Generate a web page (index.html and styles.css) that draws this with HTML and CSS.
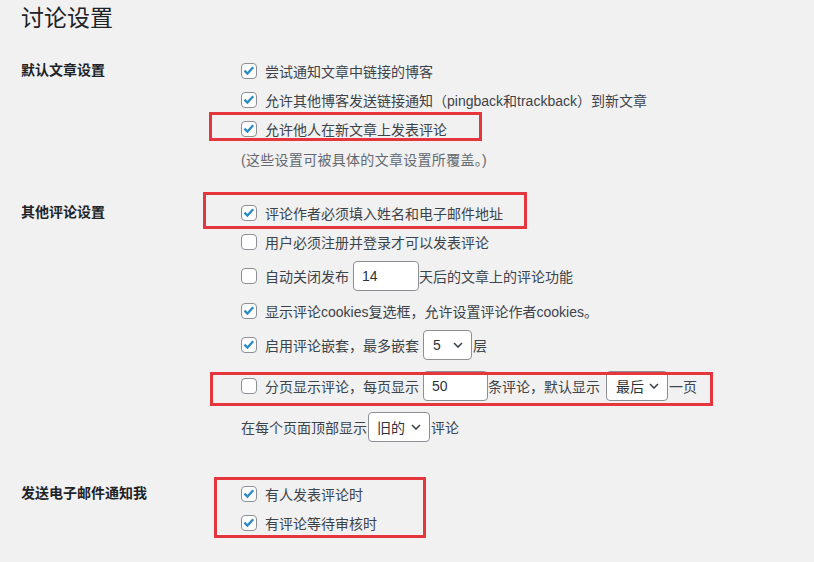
FILE: index.html
```html
<!DOCTYPE html>
<html lang="zh-CN">
<head>
<meta charset="utf-8">
<title>讨论设置</title>
<link rel="stylesheet" href="styles.css">
</head>
<body>
<div class="page">
  <h1 class="title">讨论设置</h1>

  <section class="group g1">
    <div class="th">默认文章设置</div>
    <div class="td">
      <div class="row"><span class="cb on"><svg viewBox="0 0 16 16" width="14" height="14"><path d="M2.8 7.6 L6.2 11 L12.8 3.8" /></svg></span>尝试通知文章中链接的博客</div>
      <div class="row"><span class="cb on"><svg viewBox="0 0 16 16" width="14" height="14"><path d="M2.8 7.6 L6.2 11 L12.8 3.8" /></svg></span>允许其他博客发送链接通知（pingback和trackback）到新文章</div>
      <div class="row"><span class="cb on"><svg viewBox="0 0 16 16" width="14" height="14"><path d="M2.8 7.6 L6.2 11 L12.8 3.8" /></svg></span>允许他人在新文章上发表评论</div>
      <div class="row desc">(这些设置可被具体的文章设置所覆盖。)</div>
    </div>
  </section>

  <section class="group g2">
    <div class="th">其他评论设置</div>
    <div class="td">
      <div class="row"><span class="cb on"><svg viewBox="0 0 16 16" width="14" height="14"><path d="M2.8 7.6 L6.2 11 L12.8 3.8" /></svg></span>评论作者必须填入姓名和电子邮件地址</div>
      <div class="row"><span class="cb"></span>用户必须注册并登录才可以发表评论</div>
      <div class="row h40"><span class="cb"></span>自动关闭发布<span class="input w66">14</span>天后的文章上的评论功能</div>
      <div class="row"><span class="cb on"><svg viewBox="0 0 16 16" width="14" height="14"><path d="M2.8 7.6 L6.2 11 L12.8 3.8" /></svg></span>显示评论cookies复选框，允许设置评论作者cookies。</div>
      <div class="row h40"><span class="cb on"><svg viewBox="0 0 16 16" width="14" height="14"><path d="M2.8 7.6 L6.2 11 L12.8 3.8" /></svg></span>启用评论嵌套，最多嵌套<span class="select w49">5<svg viewBox="0 0 10 6" width="10" height="6"><path d="M1 1 L5 5 L9 1" /></svg></span>层</div>
      <div class="row h41"><span class="cb"></span>分页显示评论，每页显示<span class="input w65">50</span>条评论，默认显示<span class="select w62 wide">最后<svg viewBox="0 0 10 6" width="10" height="6"><path d="M1 1 L5 5 L9 1" /></svg></span>一页</div>
      <div class="row h41">在每个页面顶部显示<span class="select w62 tight">旧的<svg viewBox="0 0 10 6" width="10" height="6"><path d="M1 1 L5 5 L9 1" /></svg></span>评论</div>
    </div>
  </section>

  <section class="group g3">
    <div class="th">发送电子邮件通知我</div>
    <div class="td">
      <div class="row"><span class="cb on"><svg viewBox="0 0 16 16" width="14" height="14"><path d="M2.8 7.6 L6.2 11 L12.8 3.8" /></svg></span>有人发表评论时</div>
      <div class="row"><span class="cb on"><svg viewBox="0 0 16 16" width="14" height="14"><path d="M2.8 7.6 L6.2 11 L12.8 3.8" /></svg></span>有评论等待审核时</div>
    </div>
  </section>

  <div class="mark m1"></div>
  <div class="mark m2"></div>
  <div class="mark m3"></div>
  <div class="mark m4"></div>
</div>
</body>
</html>
```

FILE: styles.css
```css
html, body {
  margin: 0;
  padding: 0;
  background: #f1f1f1;
}

.page {
  position: relative;
  width: 814px;
  height: 562px;
  padding-left: 21px;
  box-sizing: border-box;
  font-family: "Liberation Sans", "Noto Sans CJK SC", sans-serif;
  font-size: 14px;
  color: #3c434a;
  overflow: hidden;
}

.title {
  margin: 4px 0 23px;
  font-size: 23px;
  line-height: 29px;
  font-weight: 400;
  color: #1d2327;
}

.group {
  display: grid;
  grid-template-columns: 220px 1fr;
}

.g2 { margin-top: 25px; }
.g3 { margin-top: 32px; }

.th {
  height: 29px;
  line-height: 29px;
  font-weight: 700;
  color: #1d2327;
}

.td {
  display: flex;
  flex-direction: column;
}

.row {
  display: flex;
  align-items: center;
  height: 29px;
  white-space: nowrap;
}

.row.h40 { height: 40px; }
.row.h41 { height: 41px; }

.row.desc {
  margin-top: 1px;
  color: #646970;
  letter-spacing: 0.3px;
}

.cb {
  flex: none;
  width: 16px;
  height: 16px;
  box-sizing: border-box;
  margin-right: 8px;
  border: 1px solid #8c8f94;
  border-radius: 4px;
  background: #fff;
  display: flex;
  align-items: center;
  justify-content: center;
}

.cb svg path {
  fill: none;
  stroke: #2a8bc5;
  stroke-width: 2.6;
  stroke-linecap: butt;
  stroke-linejoin: miter;
}

.input, .select {
  flex: none;
  height: 30px;
  box-sizing: border-box;
  border: 1px solid #8c8f94;
  border-radius: 4px;
  background: #fff;
  color: #2c3338;
  display: flex;
  align-items: center;
  margin: 0 1px 0 4px;
}

.input { padding-left: 8px; margin-right: 0; }

.select {
  padding: 0 8px 0 9px;
  justify-content: space-between;
}

.select.tight { margin-left: 1px; padding-left: 8px; }
.select.wide { margin-left: 6px; }

.select svg path {
  fill: none;
  stroke: #3c434a;
  stroke-width: 1.6;
}

.w49 { width: 49px; }
.w62 { width: 62px; }
.w65 { width: 65px; }
.w66 { width: 66px; }

.mark {
  position: absolute;
  box-sizing: border-box;
  border: 3px solid #e5363d;
  pointer-events: none;
}

.m1 { left: 209px; top: 112px; width: 273px; height: 29px; }
.m2 { left: 203px; top: 192px; width: 324px; height: 37px; }
.m3 { left: 210px; top: 372px; width: 503px; height: 34px; }
.m4 { left: 214px; top: 477px; width: 212px; height: 61px; }
```
